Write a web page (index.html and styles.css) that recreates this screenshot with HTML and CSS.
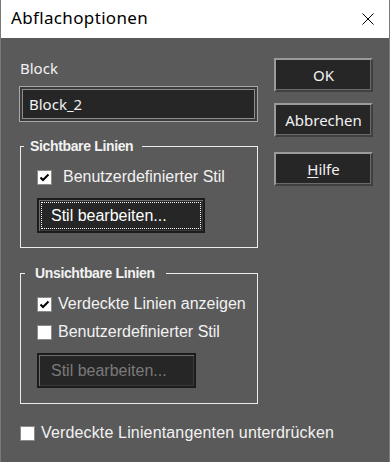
FILE: index.html
```html
<!DOCTYPE html>
<html lang="de">
<head>
  <meta charset="UTF-8">
  <meta name="viewport" content="width=device-width, initial-scale=1.0">
  <title>Abflachoptionen</title>
  <link rel="stylesheet" href="styles.css">
</head>
<body>
  <div class="dialog">
    <div class="titlebar">
      <span class="title">Abflachoptionen</span>
      <svg class="close" width="12" height="12" viewBox="0 0 12 12">
        <path d="M0.5 0.5 L11.5 11.5 M11.5 0.5 L0.5 11.5" stroke="#000" stroke-width="1" fill="none"/>
      </svg>
    </div>

    <div class="content">
      <div class="main">
        <div class="left">
          <div class="field-label">Block</div>
          <div class="field"><div class="field-inner">Block_2</div></div>

          <fieldset class="group group-visible">
            <legend>Sichtbare Linien</legend>
            <div class="group-body">
              <label class="check">
                <span class="box"><svg width="11" height="11" viewBox="0 0 11 11"><path d="M1.5 5.5 L4 8 L9.5 2.5" stroke="#000" stroke-width="2" fill="none"/></svg></span>
                <span class="check-text">Benutzerdefinierter Stil</span>
              </label>
              <button class="style-btn focused"><span class="focus-ring">Stil bearbeiten...</span></button>
            </div>
          </fieldset>

          <fieldset class="group group-hidden">
            <legend>Unsichtbare Linien</legend>
            <div class="group-body">
              <label class="check tight">
                <span class="box"><svg width="11" height="11" viewBox="0 0 11 11"><path d="M1.5 5.5 L4 8 L9.5 2.5" stroke="#000" stroke-width="2" fill="none"/></svg></span>
                <span class="check-text">Verdeckte Linien anzeigen</span>
              </label>
              <label class="check tight second">
                <span class="box"></span>
                <span class="check-text">Benutzerdefinierter Stil</span>
              </label>
              <button class="style-btn disabled" disabled><span class="focus-ring">Stil bearbeiten...</span></button>
            </div>
          </fieldset>
        </div>

        <div class="right">
          <button class="btn btn-ok">OK</button>
          <button class="btn btn-cancel">Abbrechen</button>
          <button class="btn btn-help"><u>H</u>ilfe</button>
        </div>
      </div>

      <label class="check bottom">
        <span class="box"></span>
        <span class="check-text">Verdeckte Linientangenten unterdrücken</span>
      </label>
    </div>
  </div>
</body>
</html>
```

FILE: styles.css
```css
html {
  background: #fff;
}
body {
  margin: 0;
  font-family: "Noto Sans", sans-serif;
}
.dialog {
  width: 388px;
  border-left: 1px solid #7a7a7a;
  border-right: 1px solid #7a7a7a;
}
.titlebar {
  height: 38px;
  background: #fff;
  display: flex;
  align-items: center;
  justify-content: space-between;
  padding: 0 15px 0 10px;
}
.title {
  font-size: 17px;
  letter-spacing: 0.35px;
  color: #000;
  line-height: 20px;
  margin-top: -2px;
}
.close {
  display: block;
}
.content {
  background: #5a5a5a;
  height: 424px;
  box-sizing: border-box;
  padding: 20px 0 0 18px;
}
.main {
  display: flex;
}
.left {
  width: 239px;
}
.right {
  margin-left: 16px;
  width: 99px;
  display: flex;
  flex-direction: column;
}
.field-label {
  font-size: 15px;
  line-height: 20px;
  color: #f2f2f2;
  padding-left: 1px;
}
.field {
  margin-top: 8px;
  height: 36px;
  box-sizing: border-box;
  border: 1px solid #a8a8a8;
  background: #3a3a3a;
  padding: 2px;
}
.field-inner {
  height: 100%;
  box-sizing: border-box;
  border: 1px solid #8c8c8c;
  background: #262626;
  color: #f2f2f2;
  font-size: 15px;
  line-height: 28px;
  padding-left: 6px;
}
.group {
  margin: 16px 0 0 1px;
  width: 238px;
  box-sizing: border-box;
  border: 1px solid #ececec;
  padding: 14px 0 14px 0;
  min-width: 0;
}
.group-body {
  padding-left: 16px;
}
.group legend {
  font-family: "Liberation Sans", Arial, sans-serif;
  font-weight: bold;
  font-size: 14px;
  letter-spacing: -0.35px;
  line-height: 16px;
  color: #f2f2f2;
  padding: 0 9px 0 6px;
  margin-left: 3px;
}
.group-hidden {
  margin-top: 17px;
  padding-bottom: 15px;
}
.group-hidden legend {
  margin-left: 4px;
  padding: 0 11px 0 10px;
}
.check {
  display: flex;
  align-items: center;
  height: 18px;
  font-family: "Liberation Sans", Arial, sans-serif;
  font-size: 16px;
  line-height: 18px;
  color: #f2f2f2;
}
.box {
  width: 15px;
  height: 15px;
  box-sizing: border-box;
  border: 1px solid #8a8a8a;
  background: #fff;
  display: flex;
  align-items: center;
  justify-content: center;
  margin-right: 11px;
  flex: none;
}
.check.tight .box {
  margin-right: 6px;
}
.check.second {
  margin-top: 10px;
}
.style-btn {
  display: block;
  margin-top: 12px;
  width: 168px;
  height: 35px;
  box-sizing: border-box;
  background: #262626;
  border: 2px solid #1c1c1c;
  box-shadow: inset 1px 1px 0 #6e6e6e, inset -1px -1px 0 #3a3a3a;
  padding: 2px;
  font-family: "Liberation Sans", Arial, sans-serif;
  font-size: 16px;
  color: #fff;
  text-align: left;
}
.focus-ring {
  display: block;
  height: 100%;
  box-sizing: border-box;
  border: 1px dotted transparent;
  padding-left: 9px;
  line-height: 25px;
}
.focused .focus-ring {
  border-color: #fff;
}
.style-btn.disabled {
  width: 159px;
  color: #7a7a7a;
}
.btn {
  height: 34px;
  box-sizing: border-box;
  background: #262626;
  border: 2px solid;
  border-color: #9a9a9a #404040 #404040 #9a9a9a;
  box-shadow: inset -1px -1px 0 #6a6a6a;
  color: #f2f2f2;
  font-family: "Noto Sans", sans-serif;
  font-size: 15px;
  line-height: 28px;
  padding: 0;
}
.btn u {
  text-underline-offset: 2px;
}
.btn-cancel {
  margin-top: 11px;
}
.btn-help {
  margin-top: 15px;
}
.check.bottom {
  margin-top: 20px;
  margin-left: 1px;
}
.check.bottom .box {
  margin-right: 6px;
}
.check.bottom .check-text {
  letter-spacing: 0.15px;
}
```
